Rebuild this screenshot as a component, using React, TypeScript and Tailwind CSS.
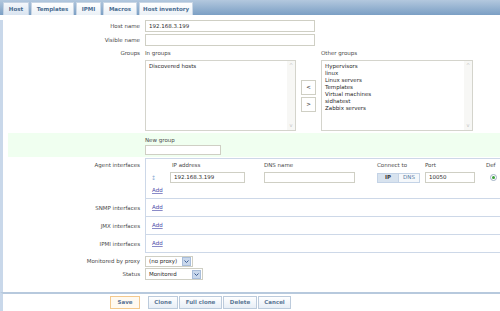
import React from 'react';

const tabs = [
  { label: 'Host', w: 'w-[26px]', active: true },
  { label: 'Templates', w: 'w-[43px]' },
  { label: 'IPMI', w: 'w-[25px]' },
  { label: 'Macros', w: 'w-[34px]' },
  { label: 'Host inventory', w: 'w-[54px]' },
];

const otherGroups = ['Hypervisors', 'linux', 'Linux servers', 'Templates', 'Virtual machines', 'sidhatest', 'Zabbix servers'];

function TextInput({ value = '', className = '' }: { value?: string; className?: string }) {
  return (
    <div className={`h-full border border-[#cfcfc4] bg-white flex items-center px-[3px] text-[#2a2a2a] ${className}`}>
      {value}
    </div>
  );
}

function ListBox({ items }: { items: string[] }) {
  return (
    <div className="h-[71px] border border-[#d4d4cc] bg-white flex">
      <div className="flex-1 pl-[3px] pt-[2px] leading-[7px] text-[#2a2a2a]">
        {items.map((it) => (
          <div key={it}>{it}</div>
        ))}
      </div>
      <div className="w-[8px] bg-[#f7f7f5] flex flex-col justify-between items-center text-[#c2c2c2] text-[5px] py-[1px]">
        <span>^</span>
        <span>v</span>
      </div>
    </div>
  );
}

function Select({ value, w }: { value: string; w: string }) {
  return (
    <div className={`${w} h-full border border-[#cfcfc4] bg-white flex items-center text-[#2a2a2a]`}>
      <span className="flex-1 pl-[3px]">{value}</span>
      <span className="w-[9px] h-[9px] mr-[1px] bg-[#c9d8ec] border border-[#a9bedb] flex items-center justify-center">
        <svg width="5" height="3" viewBox="0 0 5 3">
          <path d="M0.5 0.5 L2.5 2.5 L4.5 0.5" stroke="#3f5f94" strokeWidth="1" fill="none" />
        </svg>
      </span>
    </div>
  );
}

function AddLink() {
  return <span className="text-[#4c4ca8] underline decoration-[#8b8bc8]">Add</span>;
}

function Label({ children }: { children: React.ReactNode }) {
  return <div className="w-[142px] shrink-0 text-right pr-[5px]">{children}</div>;
}

export default function App() {
  return (
    <div className="w-[500px] h-[311px] overflow-hidden bg-white font-['DejaVu_Sans',Verdana,sans-serif] text-[5.5px] text-[#4a4a4a]">
      {/* tab bar */}
      <div className="h-[15px] bg-gradient-to-b from-[#b3c8de] to-[#7b9fc4] flex items-end gap-[2px] pl-[3px]">
        {tabs.map((t) => (
          <div
            key={t.label}
            className={`${t.w} h-[13px] flex items-center justify-center font-bold border border-b-0 ${
              t.active
                ? 'bg-gradient-to-b from-[#f4f7fb] to-[#d9e4f0] border-[#c5d3e3] text-[#45678c]'
                : 'bg-gradient-to-b from-[#ffffff] to-[#eaf0f6] border-[#c9d6e5] text-[#4a6c91]'
            }`}
          >
            {t.label}
          </div>
        ))}
      </div>

      {/* form body */}
      <div className="h-[272px] border-l-[3px] border-[#c9d8ea]">
        <div className="flex items-center h-[12px] mt-[5px]">
          <Label>Host name</Label>
          <TextInput value="192.168.3.199" className="w-[170px]" />
        </div>
        <div className="flex items-center h-[12px] mt-[2px]">
          <Label>Visible name</Label>
          <TextInput className="w-[170px]" />
        </div>

        <div className="flex mt-[2px]">
          <Label>
            <div className="h-[10px] flex items-center justify-end">Groups</div>
          </Label>
          <div className="w-[151px]">
            <div className="h-[10px] flex items-center">In groups</div>
            <div className="mt-[2px]">
              <ListBox items={['Discovered hosts']} />
            </div>
          </div>
          <div className="w-[15px] mx-[5px] flex flex-col gap-[2px] pt-[32px]">
            <div className="h-[15px] border border-[#cfcfc4] bg-white flex items-center justify-center text-[#333]">&lt;</div>
            <div className="h-[15px] border border-[#cfcfc4] bg-white flex items-center justify-center text-[#333]">&gt;</div>
          </div>
          <div className="w-[152px]">
            <div className="h-[10px] flex items-center">Other groups</div>
            <div className="mt-[2px]">
              <ListBox items={otherGroups} />
            </div>
          </div>
        </div>

        {/* new group */}
        <div className="ml-[5px] mt-[2px] h-[24px] bg-[#f0fff0] pl-[137px] pt-[3px]">
          <div className="h-[9px] flex items-center">New group</div>
          <div className="h-[10px] w-[76px]">
            <TextInput />
          </div>
        </div>

        {/* interfaces */}
        <div className="flex mt-[1px]">
          <Label>
            <div className="h-[9px] mt-[3px] flex items-center justify-end">Agent interfaces</div>
          </Label>
          <div className="flex-1 border-l border-y border-[#cdd8e8] h-[41px] pt-[2px]">
            <div className="grid grid-cols-[24px_94px_113px_48px_61px_1fr] h-[9px] items-center">
              <div />
              <div className="pl-[2px]">IP address</div>
              <div>DNS name</div>
              <div>Connect to</div>
              <div>Port</div>
              <div>Def</div>
            </div>
            <div className="grid grid-cols-[24px_94px_113px_48px_61px_1fr] h-[11px] mt-[2px] items-center">
              <div className="pl-[5px] text-[#8fb0d6] text-[6px]">↕</div>
              <div className="h-[11px] w-[75px]">
                <TextInput value="192.168.3.199" />
              </div>
              <div className="h-[11px] w-[91px]">
                <TextInput />
              </div>
              <div className="h-[10px] w-[43px] flex border border-[#c4d3e6]">
                <div className="flex-1 bg-[#d8e3ef] font-bold text-[#3c3c3c] flex items-center justify-center">IP</div>
                <div className="flex-1 bg-[#f5f8fb] text-[#5a7ca3] flex items-center justify-center border-l border-[#c4d3e6]">DNS</div>
              </div>
              <div className="h-[11px] w-[50px]">
                <TextInput value="10050" />
              </div>
              <div className="pl-[4px]">
                <div className="w-[7px] h-[7px] rounded-full border border-[#9fb1c4] bg-white flex items-center justify-center">
                  <div className="w-[3px] h-[3px] rounded-full bg-[#3aa03a]" />
                </div>
              </div>
            </div>
            <div className="pl-[6px] mt-[3px] h-[9px] flex items-center">
              <AddLink />
            </div>
          </div>
        </div>

        {['SNMP interfaces', 'JMX interfaces', 'IPMI interfaces'].map((l) => (
          <div key={l} className="flex items-center">
            <Label>{l}</Label>
            <div className="flex-1 h-[18px] border-l border-b border-[#cdd8e8] pl-[6px] flex items-center">
              <AddLink />
            </div>
          </div>
        ))}

        <div className="flex items-center h-[11px] mt-[3px]">
          <Label>Monitored by proxy</Label>
          <Select value="(no proxy)" w="w-[48px]" />
        </div>
        <div className="flex items-center h-[12px] mt-[1px]">
          <Label>Status</Label>
          <Select value="Monitored" w="w-[58px]" />
        </div>
      </div>

      {/* footer */}
      <div className="border-t-2 border-[#b7c9dd] h-[19px] flex items-center border-l-[3px] border-l-[#c9d8ea]">
        <div className="ml-[107px] flex items-center">
          <button className="w-[30px] h-[13px] border border-[#f3c98e] bg-[#fffaf1] text-[#5a7596] font-bold">Save</button>
          <div className="ml-[8px] flex gap-[1px]">
            {[
              ['Clone', 'w-[30px]'],
              ['Full clone', 'w-[43px]'],
              ['Delete', 'w-[34px]'],
              ['Cancel', 'w-[33px]'],
            ].map(([b, w]) => (
              <button
                key={b}
                className={`${w} h-[13px] border border-[#bccbdc] bg-gradient-to-b from-[#ffffff] to-[#e7eef6] text-[#5b7795] font-bold`}
              >
                {b}
              </button>
            ))}
          </div>
        </div>
      </div>
      <div className="h-[5px] bg-[#dfe7f1] border-t border-[#c3d2e3]" />
    </div>
  );
}
